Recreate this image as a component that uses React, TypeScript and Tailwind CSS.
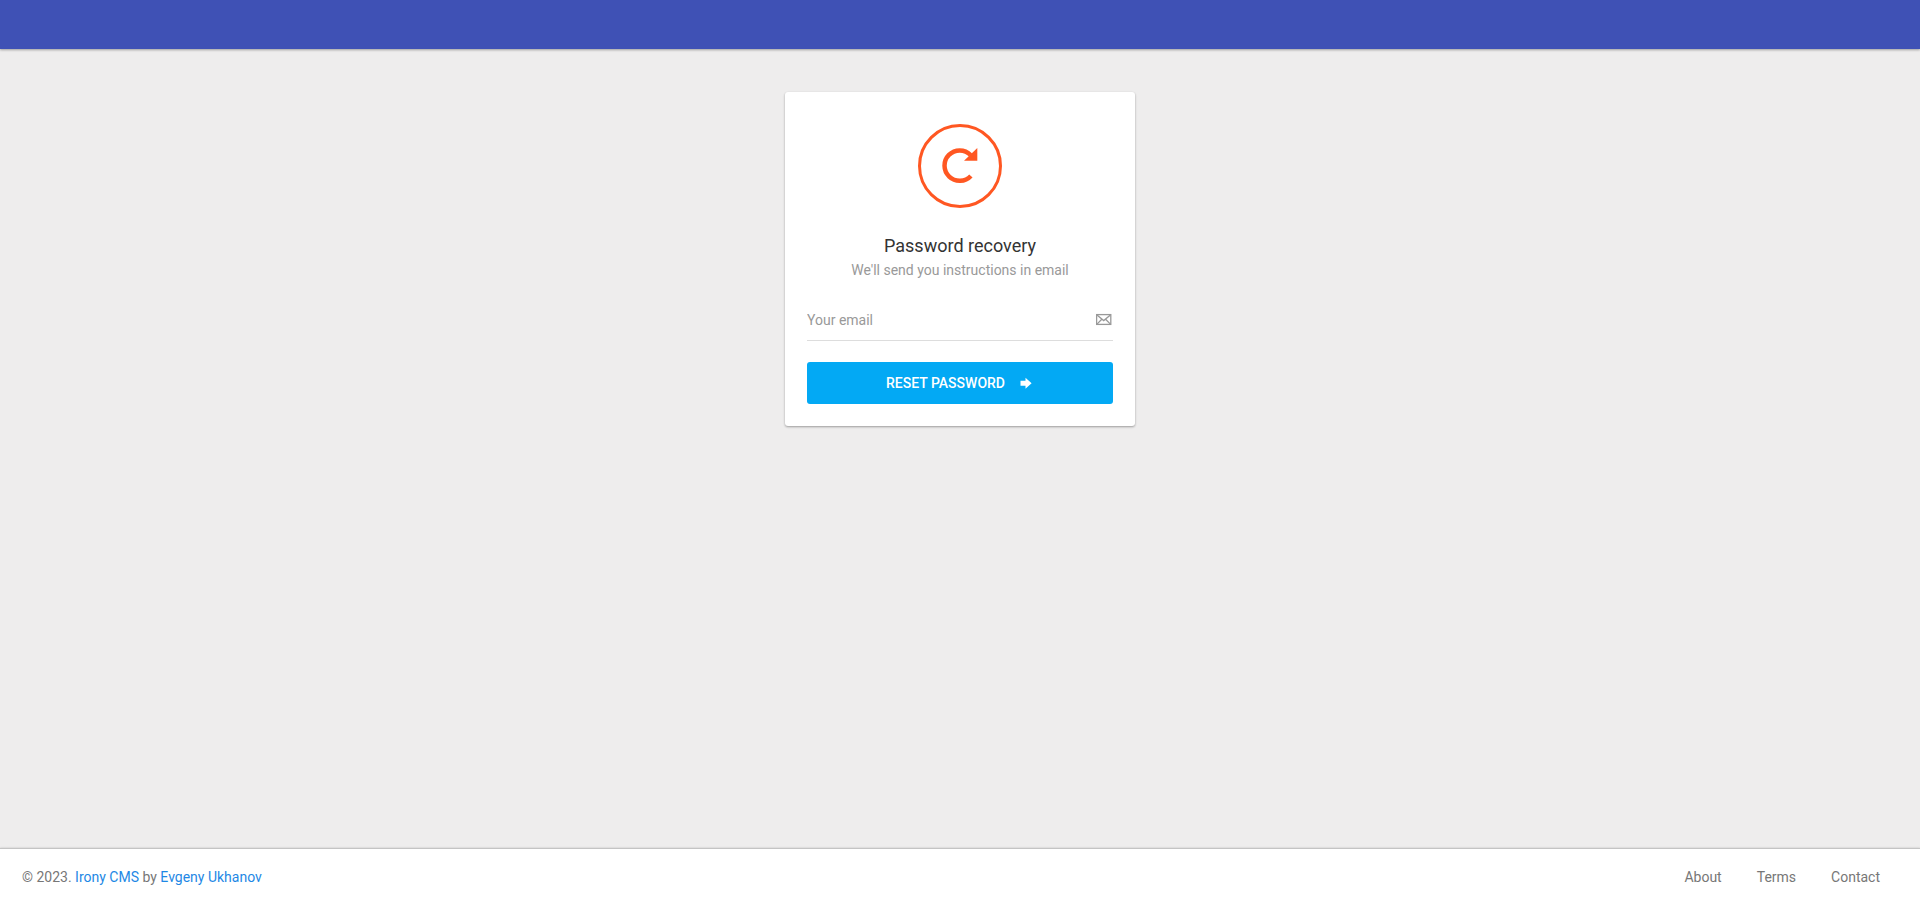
import React from 'react';

function RecoverIcon() {
  return (
    <svg className="size-9" viewBox="0 0 36 36" aria-hidden="true">
      <path d="M28.6 7A15.2 15.2 0 1 0 28.9 27.9" fill="none" stroke="currentColor" strokeWidth="4.5" />
      <path d="M35.3 0V12.7H22Z" fill="currentColor" />
    </svg>
  );
}

function EnvelopeIcon() {
  return (
    <svg className="size-4" viewBox="0 0 16 16" fill="none" stroke="currentColor" aria-hidden="true">
      <rect x="0.6" y="2.6" width="14.2" height="9.8" strokeWidth="1.3" />
      <path d="M1 3L7.7 8.6L14.4 3M1 12.1L5.8 7.2M14.4 12.1L9.6 7.2" strokeWidth="1.3" />
    </svg>
  );
}

function ArrowIcon() {
  return (
    <svg className="size-4" viewBox="0 0 16 16" fill="currentColor" aria-hidden="true">
      <path d="M2.5 5.7H7.5V2.7L13.6 8.2L7.5 13.7V10.7H2.5Z" />
    </svg>
  );
}

export default function App() {
  return (
    <div className="flex min-h-screen flex-col bg-[#eeeded] font-['Roboto',sans-serif] text-sm leading-[22px] text-[#333]">
      <header className="relative h-[49px] bg-[#3f51b5] shadow-[0_1px_3px_rgba(0,0,0,0.12),0_1px_2px_rgba(0,0,0,0.24)]" />

      <main className="flex flex-1 flex-col items-center px-5 pt-[43px] pb-5">
        <form
          className="w-full max-w-[350px] rounded-[3px] bg-white p-[22px] shadow-[0_1px_3px_rgba(0,0,0,0.12),0_1px_2px_rgba(0,0,0,0.24)]"
          onSubmit={(e: React.FormEvent) => e.preventDefault()}
        >
          <div className="flex flex-col items-center text-center">
            <div className="mt-[10px] flex size-[84px] items-center justify-center rounded-full border-3 border-[#ff5722] text-[#ff5722]">
              <RecoverIcon />
            </div>
            <h1 className="mt-[26px] text-lg leading-6">Password recovery</h1>
            <p className="leading-6 text-[#999]">We'll send you instructions in email</p>
          </div>

          <div className="mt-5 flex h-[39px] items-center border-b border-[#ddd] pr-px pb-0.5 text-[#999]">
            <input
              type="email"
              aria-label="Your email"
              placeholder="Your email"
              className="min-w-0 flex-1 bg-transparent outline-none placeholder:text-[#999]"
            />
            <EnvelopeIcon />
          </div>

          <button
            type="submit"
            className="mt-[21px] flex h-[42px] w-full items-center justify-center gap-[13px] rounded-[3px] bg-[#03a9f4] font-medium text-white uppercase"
          >
            Reset password
            <ArrowIcon />
          </button>
        </form>
      </main>

      <footer className="flex items-center justify-between border-t border-[#c4c4c4] bg-white pt-[17px] pr-10 pb-[11px] pl-[22px] text-[#777] shadow-[0_0_2px_rgba(0,0,0,0.2)]">
        <p>
          © 2023. <a href="#irony" className="text-[#1e88e5]">Irony CMS</a> by{' '}
          <a href="#author" className="text-[#1e88e5]">Evgeny Ukhanov</a>
        </p>
        <nav className="flex gap-[35px]">
          <a href="#about">About</a>
          <a href="#terms">Terms</a>
          <a href="#contact">Contact</a>
        </nav>
      </footer>
    </div>
  );
}
